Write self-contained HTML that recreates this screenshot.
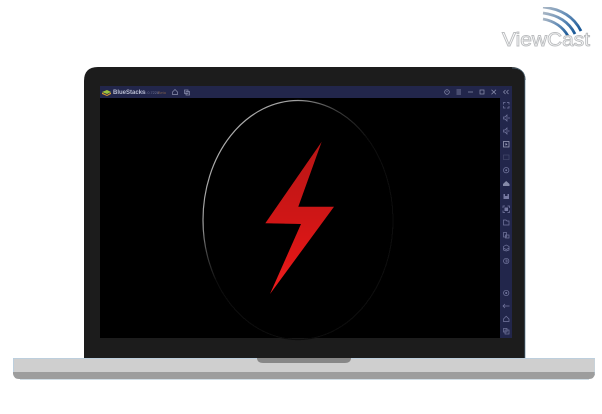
<!DOCTYPE html>
<html>
<head>
<meta charset="utf-8">
<style>
html,body{margin:0;padding:0;background:#fff;width:602px;height:414px;overflow:hidden}
svg{display:block;position:absolute;left:0;top:0}
text{font-family:"Liberation Sans",sans-serif}
</style>
</head>
<body>
<svg width="602" height="414" viewBox="0 0 602 414" xmlns="http://www.w3.org/2000/svg">
<defs>
<radialGradient id="ring" gradientUnits="userSpaceOnUse" cx="240" cy="155" r="130">
<stop offset="0" stop-color="#b0b0b0"/>
<stop offset="0.6" stop-color="#a0a0a0"/>
<stop offset="0.8" stop-color="#444"/>
<stop offset="1" stop-color="#0a0a0a"/>
</radialGradient>
<linearGradient id="bolt" x1="0" y1="0" x2="0" y2="1">
<stop offset="0" stop-color="#b91212"/>
<stop offset="0.5" stop-color="#cf1515"/>
<stop offset="1" stop-color="#ee1c1c"/>
</linearGradient>
<linearGradient id="arc" x1="0" y1="0" x2="1" y2="1">
<stop offset="0" stop-color="#a9b6c4"/>
<stop offset="0.5" stop-color="#5f8ab6"/>
<stop offset="1" stop-color="#175695"/>
</linearGradient>
<filter id="soft" x="0" y="0" width="100%" height="100%"><feGaussianBlur stdDeviation="0.35"/></filter>
</defs>
<g filter="url(#soft)">
<!-- ViewCast logo -->
<g fill="none" stroke="url(#arc)" stroke-width="2.800">
<path d="M543 7C562 9 574 17 581 31"/>
<path d="M543 13C558 15 569 22 575 34"/>
<path d="M543 19C554 21 563 27 568 36"/>
</g>
<text x="502" y="46" font-size="19.500" fill="#fff" stroke="#bcbec0" stroke-width="0.900" textLength="88" lengthAdjust="spacingAndGlyphs">ViewCast</text>

<!-- laptop lid -->
<path d="M84 358V81Q84 67 98 67H511Q525 67 525 81V358Z" fill="#1b1b1b"/>
<path d="M525 78V358" stroke="#5f7f97" stroke-width="0.700" fill="none"/>
<path d="M512 68Q525 68 525.300 80" stroke="#4d6474" stroke-width="0.700" fill="none"/>

<!-- screen -->
<rect x="100" y="86" width="412" height="252" fill="#24284c"/>
<rect x="100" y="98" width="400" height="240" fill="#000"/>

<!-- circle + bolt -->
<ellipse cx="298" cy="220" rx="95" ry="119.500" fill="none" stroke="url(#ring)" stroke-width="1.200"/>
<path d="M321.700 141.700L298.300 206.700H334L270 294L301 224L265.300 223.300Z" fill="url(#bolt)"/>

<!-- title bar -->
<path d="M102 92L107 90L111 92L107 94Z" fill="#9bc23c"/>
<path d="M102 92.500L107 95L111 92.500V94L107 96L102 94Z" fill="#d99a2e"/>
<text x="113" y="94" font-size="6" font-weight="bold" fill="#b9bdd2">BlueStacks</text>
<text x="141" y="94" font-size="3.800" fill="#6f7496">5.0.0.7228</text>
<text x="158" y="94" font-size="3.800" fill="#7a5a4a">Beta</text>

<g fill="none" stroke="#8d91b0" stroke-width="0.700">
<path d="M172.500 92L175 89.500L177.500 92V94.500H172.500Z"/>
<rect x="184.500" y="90" width="3.500" height="3.500"/>
<rect x="186" y="91.500" width="3.500" height="3.500"/>
<circle cx="447" cy="92" r="2.300"/>
<path d="M447 90.800V92.200"/>
<path d="M456.500 90H461M456.500 92H461M456.500 94H461"/>
<path d="M468 92H473"/>
<rect x="480" y="90" width="4" height="4"/>
<path d="M491.500 89.700L496 94.300M496 89.700L491.500 94.300"/>
<path d="M505.500 90L503.500 92L505.500 94M508.500 90L506.500 92L508.500 94"/>
</g>

<!-- sidebar icons -->
<g fill="none" stroke="#7478a0" stroke-width="0.700">
<path d="M503.500 104.500V102.500H505.500M507 102.500H509V104.500M509 106V108H507M505.500 108H503.500V106"/>
<path d="M503.500 117H505L507 115V121L505 119H503.500ZM508 118H510"/>
<path d="M503.500 130H505L507 128V134L505 132H503.500ZM508 131H509.500"/>
<rect x="503.500" y="141.500" width="5.500" height="5.500" stroke="#a6a9c4"/>
<path d="M505.500 143V145.500L507.500 144.200Z" fill="#a6a9c4" stroke="none"/>
<rect x="503.500" y="155" width="5.500" height="4.500" stroke="#44486c"/>
<circle cx="506.200" cy="170.200" r="2.700"/>
<circle cx="506.200" cy="170.200" r="0.900" fill="#7478a0" stroke="none"/>
<path d="M503 186H509.500V184L506.200 181L503 184Z" fill="#858aa8" stroke="none"/>
<path d="M503.500 194V199H509V194H507.500V196H505V194Z" fill="#7478a0" stroke="none"/>
<rect x="504.500" y="207.500" width="3.500" height="3.500" fill="#7478a0" stroke="none"/>
<path d="M503 208V206H505M507.500 206H509.500V208M509.500 210.500V212.500H507.500M505 212.500H503V210.500"/>
<path d="M503.500 220H506L507 221H509V225H503.500Z"/>
<rect x="503.500" y="232.500" width="3" height="4.500"/>
<rect x="505.500" y="235" width="3.500" height="3"/>
<path d="M503.500 246.500L506.200 245L509 246.500V250L506.200 251L503.500 250ZM503.500 248.200L506.200 249.500L509 248.200"/>
<circle cx="506.200" cy="261" r="2.700"/>
<path d="M505.200 260H507V262H505.400"/>
<circle cx="506.200" cy="293" r="2.700"/>
<circle cx="506.200" cy="293" r="1" fill="#7478a0" stroke="none"/>
<path d="M503 306H509.500M505 304L503 306L505 308"/>
<path d="M503.500 319L506.200 316.300L509 319V321.500H503.500Z"/>
<rect x="503.500" y="328.500" width="3.500" height="3.500"/>
<rect x="505" y="330" width="4" height="4"/>
</g>

<!-- base -->
<path d="M13 358H595V374Q594 379 589 379H19Q14 379 13 374Z" fill="#9d9d9d"/>
<path d="M13 358H595V372H13Z" fill="#cfcfcf"/>
<path d="M13.400 372V358.400H595" fill="none" stroke="#b7cfe2" stroke-width="0.800"/>
<path d="M595 358V374" stroke="#bcd5e8" stroke-width="0.800" fill="none"/>
<path d="M20 379.300H589" stroke="#a6bccd" stroke-width="0.700" fill="none"/>
<path d="M257 358H351V359Q350 363 345 363H263Q258 363 257 359Z" fill="#878787"/>
</g>
</svg>
</body>
</html>
